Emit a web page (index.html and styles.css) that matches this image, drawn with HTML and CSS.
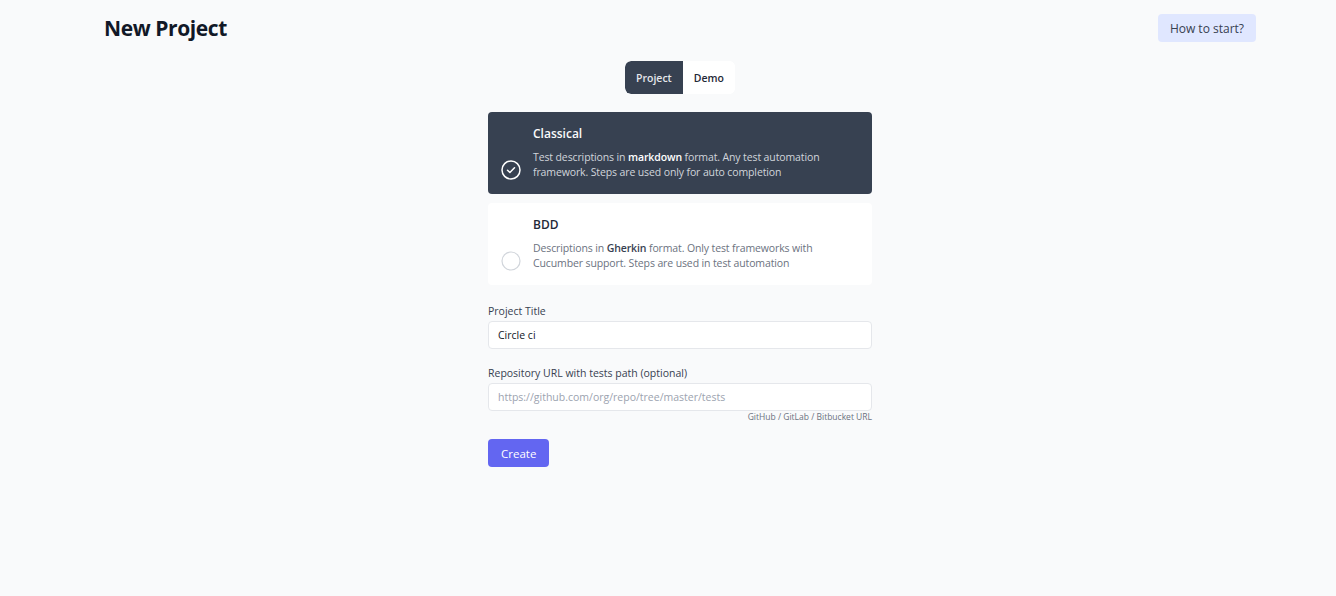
FILE: index.html
```html
<!DOCTYPE html>
<html lang="en">
<head>
<meta charset="UTF-8">
<meta name="viewport" content="width=device-width, initial-scale=1.0">
<title>New Project</title>
<link rel="stylesheet" href="styles.css">
</head>
<body>

<div class="page">
    <header class="top">
        <h1>New Project</h1>
        <button class="help-btn">How to start?</button>
    </header>

    <div class="content">
        <div class="tabs">
            <button class="tab active">Project</button>
            <button class="tab">Demo</button>
        </div>

        <div class="mode-list">
            <div class="mode selected">
                <svg class="mode-icon" width="20" height="20" viewBox="0 0 20 20" fill="none">
                    <circle cx="10" cy="10" r="9" stroke="#fff" stroke-width="1.5"/>
                    <path d="M6.5 10.2l2.4 2.3 4.6-4.8" stroke="#fff" stroke-width="1.5" stroke-linecap="round" stroke-linejoin="round"/>
                </svg>
                <div class="mode-text">
                    <h3>Classical</h3>
                    <p>Test descriptions in <b>markdown</b> format. Any test automation framework. Steps are used only for auto completion</p>
                </div>
            </div>

            <div class="mode">
                <svg class="mode-icon" width="20" height="20" viewBox="0 0 20 20" fill="none">
                    <circle cx="10" cy="10" r="9" stroke="#d1d5db" stroke-width="1.2"/>
                </svg>
                <div class="mode-text">
                    <h3>BDD</h3>
                    <p>Descriptions in <b>Gherkin</b> format. Only test frameworks with Cucumber support. Steps are used in test automation</p>
                </div>
            </div>
        </div>

        <form class="project-form">
            <label for="title">Project Title</label>
            <input type="text" id="title" value="Circle ci">

            <label for="repo" class="second">Repository URL with tests path (optional)</label>
            <input type="text" id="repo" placeholder="https://github.com/org/repo/tree/master/tests">
            <div class="hint">GitHub / GitLab / Bitbucket URL</div>

            <button type="button" class="create-btn">Create</button>
        </form>
    </div>
</div>

</body>
</html>
```

FILE: styles.css
```css
body {
    margin: 0;
    padding: 0;
    background-color: #f9fafb;
    font-family: "Open Sans", "Noto Sans", sans-serif;
    color: #1f2937;
}

.page {
    padding: 0 80px 0 104px;
}

.top {
    display: flex;
    justify-content: space-between;
    align-items: center;
    height: 56px;
}

.top h1 {
    margin: 0;
    font-size: 21px;
    letter-spacing: -0.4px;
    font-weight: 700;
    color: #111827;
}

.help-btn {
    background-color: #e0e7ff;
    border: none;
    border-radius: 4px;
    height: 28px;
    padding: 0 12px;
    font-family: inherit;
    font-size: 12px;
    color: #374151;
    cursor: pointer;
}

.content {
    display: flex;
    flex-direction: column;
    align-items: center;
}

.tabs {
    display: flex;
    margin-top: 5px;
    border-radius: 6px;
    overflow: hidden;
    background-color: #fff;
}

.tab {
    height: 33px;
    padding: 0 11px;
    border: none;
    background-color: #fff;
    font-family: inherit;
    font-size: 10.5px;
    font-weight: 600;
    color: #1f2937;
    cursor: pointer;
}

.tab.active {
    background-color: #374151;
    color: #e5e7eb;
    border-radius: 6px 0 0 6px;
}

.mode-list {
    display: flex;
    flex-direction: column;
    gap: 9px;
    width: 384px;
    margin-top: 18px;
}

.mode {
    display: flex;
    align-items: flex-end;
    gap: 12px;
    padding: 13px 16px 14px 13px;
    background-color: #fff;
    border-radius: 4px;
}

.mode.selected {
    background-color: #374151;
}

.mode-icon {
    flex-shrink: 0;
}

.mode-text h3 {
    margin: 0 0 7px;
    font-size: 12px;
    line-height: 18px;
    font-weight: 600;
    color: #1f2937;
}

.mode-text p {
    margin: 0;
    font-size: 10.5px;
    letter-spacing: -0.12px;
    line-height: 15px;
    color: #6b7280;
}

.mode-text b {
    font-weight: 600;
    color: #374151;
}

.mode.selected h3 {
    color: #f9fafb;
}

.mode.selected p {
    color: #d1d5db;
}

.mode.selected b {
    color: #fff;
}

.project-form {
    display: flex;
    flex-direction: column;
    width: 384px;
    margin-top: 19px;
}

.project-form label {
    font-size: 10.5px;
    line-height: 15px;
    color: #374151;
    margin-bottom: 2px;
}

.project-form label.second {
    margin-top: 17px;
}

.project-form input {
    box-sizing: border-box;
    height: 28px;
    padding: 0 9px;
    border: 1px solid #e5e7eb;
    border-radius: 4px;
    background-color: #fff;
    font-family: inherit;
    font-size: 10.5px;
    color: #111827;
    outline: none;
}

.project-form input::placeholder {
    color: #9ca3af;
}

.hint {
    text-align: right;
    font-size: 8.5px;
    line-height: 12px;
    color: #6b7280;
}

.create-btn {
    align-self: flex-start;
    margin-top: 16px;
    height: 28px;
    padding: 0 13px;
    border: none;
    border-radius: 4px;
    background-color: #6366f1;
    color: #fff;
    font-family: inherit;
    font-size: 11.5px;
    cursor: pointer;
}
```
